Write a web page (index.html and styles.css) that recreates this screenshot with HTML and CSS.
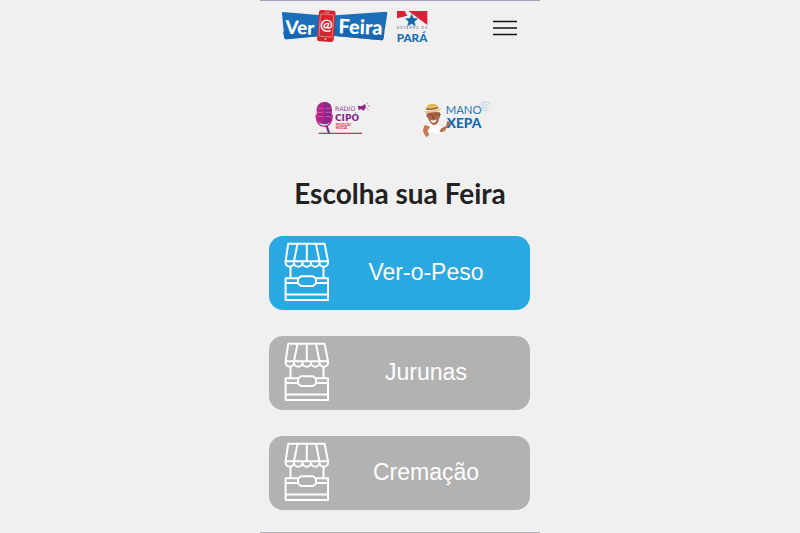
FILE: index.html
```
<!DOCTYPE html>
<html lang="pt-BR">
<head>
<meta charset="utf-8">
<meta name="viewport" content="width=device-width, initial-scale=1">
<title>Ver@Feira</title>
<link rel="stylesheet" href="styles.css">
</head>
<body>
<svg class="defs" aria-hidden="true">
  <symbol id="stand" viewBox="0 0 46 60">
    <g fill="none" stroke="#fff" stroke-width="2" stroke-linejoin="round">
      <path d="M4.2 1.8H40.6L44 19.3H1.6ZM13.5 2L10 19M22.8 2V19M32 2L35.4 19"/>
      <path d="M1.6 19.3v1.5a4.2 3.8 0 0 0 8.4 0v-1.5M10 20.8a4.2 3.8 0 0 0 8.5 0v-1.5M18.5 20.8a4.2 3.8 0 0 0 8.5 0v-1.5M27 20.8a4.2 3.8 0 0 0 8.5 0v-1.5M35.5 20.8a4.2 3.8 0 0 0 8.5 0v-1.5"/>
      <path d="M6.5 24V36M39.5 24V36"/>
      <path d="M14 36.3H1.6V58H44V36.3H32M1.6 41H14M32 41H44M1.6 52.6H44"/>
      <path d="M17 34.2H29L32 36.6V41.4L29 44H17L14 41.4V36.6Z"/>
    </g>
  </symbol>
</svg>
<div class="page">
  <header class="header">
    <a class="brand" href="#" aria-label="Ver@Feira">
      <svg class="brand-feira" viewBox="18 24 324 108">
        <path d="M24 36L130 45L182 46L334 35Q338 35 337 40L325 117Q324 121 320 121L180 108L130 109L34 118Q29 118 28 113L21 41Q20 36 24 36Z" fill="#1b6fb8"/>
        <path d="M24 95L130 86L182 88L328 98L325 117Q324 121 320 121L180 108L130 109L34 118Q29 118 28 113Z" fill="#1767b0"/>
        <text class="lettering" x="31" y="101" font-size="56" transform="rotate(2 32 101)">Ver</text>
        <text class="lettering" x="190" y="100" font-size="60" transform="rotate(2 190 101)">Feira</text>
        <g transform="rotate(4 154 78)">
          <rect x="129" y="31" width="50" height="94" rx="8" fill="#d8232f"/>
          <rect x="134" y="43" width="40" height="67" rx="3" fill="none" stroke="#f3a3a5" stroke-width="2"/>
          <path d="M146 37H162" stroke="#f3a3a5" stroke-width="2"/>
          <circle cx="154" cy="117" r="3" fill="#f8c4c5"/>
          <text class="lettering at" x="154" y="90" font-size="45" text-anchor="middle">@</text>
        </g>
      </svg>
      <svg class="brand-para" viewBox="24 30 99 99">
        <path d="M27 33V55L58 47L50 33ZM61 33H118V75Z" fill="#e21e36"/>
        <path d="M71 40L77 54L92 55L80 65L84 80L71 72L57 80L61 65L50 55L65 54Z" fill="#1768ab" stroke="#f0f0f0" stroke-width="1"/>
        <text class="small-caps" x="27" y="88" font-size="8" fill="#62758e">GOVERNO DO</text>
        <text class="heavy" x="72" y="125" font-size="35" text-anchor="middle" fill="#176fb4">PARÁ</text>
      </svg>
    </a>
    <button class="menu" type="button" aria-label="Abrir menu">
      <svg class="menu-icon" viewBox="0 0 24 16"><path d="M0 1.5H24M0 8H24M0 14.5H24" stroke="#111" stroke-width="1.6"/></svg>
    </button>
  </header>
  <main class="main">
    <nav class="partners" aria-label="Parceiros">
      <a href="#" aria-label="Rádio Cipó">
        <svg class="cipo" viewBox="27 24 180 108">
          <rect x="38" y="30" width="45" height="67" rx="22" fill="#b02286"/>
          <path d="M61 30Q83 30 83 52V75Q83 97 61 97Z" fill="#8e258d"/>
          <path d="M42 49H58M39 61H58M41 74H58M64 49H81M64 61H82M64 74H81" stroke="#dc78b9" stroke-width="2"/>
          <path d="M36 68Q37 102 61 103Q84 102 85 68" fill="none" stroke="#c61b80" stroke-width="4"/>
          <path d="M64 101L72 124H79L71 101Z" fill="#71308d"/>
          <path d="M44 124H174" stroke="#cb3052" stroke-width="4"/>
          <text class="thin wide" x="93" y="58" font-size="19" fill="#9b3a91">RADIO</text>
          <text class="bold wide" x="93" y="87" font-size="27" fill="#812787">CIPÓ</text>
          <text class="heavy" x="95" y="102" font-size="8" fill="#d3284d">PRODUÇÃO</text>
          <text class="heavy" x="95" y="112" font-size="8" fill="#d3284d">MUSICAL</text>
          <path d="M161 41L173 43L183 36L186 46L179 56L171 51L164 55Z" fill="#922583"/>
          <path d="M187 32L192 36M192 42L199 42M189 49L194 53" stroke="#a05898" stroke-width="2"/>
        </svg>
      </a>
      <a href="#" aria-label="Mano Xepa">
        <svg class="mano" viewBox="27 24 216 117">
          <path d="M43 104L61 96L83 101L97 110L91 126L51 121Z" fill="#fff"/>
          <path d="M49 57Q48 91 68 100Q87 98 85 61Z" fill="#ad6544"/>
          <path d="M47 61L53 79L47 73ZM85 60L89 67L84 79Z" fill="#633626"/>
          <path d="M55 68H62M72 67H79M67 70L65 78L70 79" fill="none" stroke="#58301f" stroke-width="2"/>
          <path d="M58 83Q68 88 77 82Q74 93 67 92Q60 91 58 83Z" fill="#fff"/>
          <path d="M45 53Q46 38 59 36Q78 32 82 48Z" fill="#e6b85d"/>
          <path d="M34 56Q60 60 92 49Q85 59 67 61Q44 65 34 56Z" fill="#f0c86e"/>
          <path d="M46 51Q63 54 82 47" fill="none" stroke="#8b5631" stroke-width="4"/>
          <path d="M42 99Q33 112 38 123L46 136L55 128L49 117L58 104Z" fill="#c8794e"/>
          <path d="M85 119Q99 124 106 109L121 93L126 84L114 91L109 87L105 102L91 109Z" fill="#b97048"/>
          <text class="thin" x="104" y="67" font-size="34" fill="#2b79bb">MANO</text>
          <text class="heavy" x="107" y="108" font-size="41" fill="#116ab3">XEPA</text>
          <path d="M121 93L112 103L109 87Z" fill="#b97048"/>
          <path d="M213 31H236M215 39H231M213 47H233M218 55H229M213 31V57M236 31V39" fill="none" stroke="#a8c9e0" stroke-width="2"/>
        </svg>
      </a>
    </nav>
    <h1 class="title">Escolha sua Feira</h1>
    <div class="fairs">
      <button class="fair fair-active" type="button"><svg class="stand" aria-hidden="true"><use href="#stand"/></svg><span class="fair-name">Ver-o-Peso</span></button>
      <button class="fair" type="button"><svg class="stand" aria-hidden="true"><use href="#stand"/></svg><span class="fair-name">Jurunas</span></button>
      <button class="fair" type="button"><svg class="stand" aria-hidden="true"><use href="#stand"/></svg><span class="fair-name">Cremação</span></button>
    </div>
  </main>
</div>
</body>
</html>
```
FILE: styles.css
```
* { box-sizing: border-box; }
body {
  margin: 0;
  background: #f0f0f0;
  font-family: "Liberation Sans", Arial, sans-serif;
}
svg { display: block; }
.defs { display: none; }
.page {
  max-width: 280px;
  margin: 0 auto;
  border-top: 1px solid #aaa0ba;
  border-bottom: 1px solid #b8b6bc;
}
.header {
  display: flex;
  align-items: flex-end;
  justify-content: space-between;
  padding: 7px 23px 0 21px;
}
.brand { display: flex; align-items: center; gap: 7px; }
.brand-feira { width: 108px; height: 36px; }
.brand-para { width: 33px; height: 33px; }
.lettering { font-family: Lato, sans-serif; font-weight: 900; fill: #fff; }
.at { font-weight: 700; }
.heavy { font-family: Lato, sans-serif; font-weight: 900; }
.thin { font-family: Lato, sans-serif; font-weight: 400; }
.bold { font-weight: 700; }
.wide { font-family: "DejaVu Sans", sans-serif; }
.small-caps { font-family: Lato, sans-serif; font-weight: 700; letter-spacing: 4px; }
.menu { padding: 0 0 8px; border: 0; background: none; cursor: pointer; }
.menu-icon { width: 24px; height: 16px; }
.partners {
  display: flex;
  justify-content: center;
  gap: 47px;
  padding: 56px 0 0 5px;
}
.cipo { width: 60px; height: 36px; }
.mano { width: 72px; height: 39px; }
.title {
  margin: 37px 0 26px;
  font: 700 28px/34px Lato, sans-serif;
  text-align: center;
  color: #222;
}
.fairs {
  display: flex;
  flex-direction: column;
  gap: 26px;
  padding: 0 10px 22px 9px;
}
.fair {
  display: flex;
  align-items: center;
  padding: 6px 8px 8px 15px;
  border: 0;
  border-radius: 14px;
  background: #b2b2b2;
  color: #fff;
  font: 23px/28px "Liberation Sans", Arial, sans-serif;
  cursor: pointer;
}
.fair-active { background: #2aa8e1; }
.stand { width: 46px; height: 60px; flex: none; }
.fair-name { flex: 1; text-align: center; }
```
